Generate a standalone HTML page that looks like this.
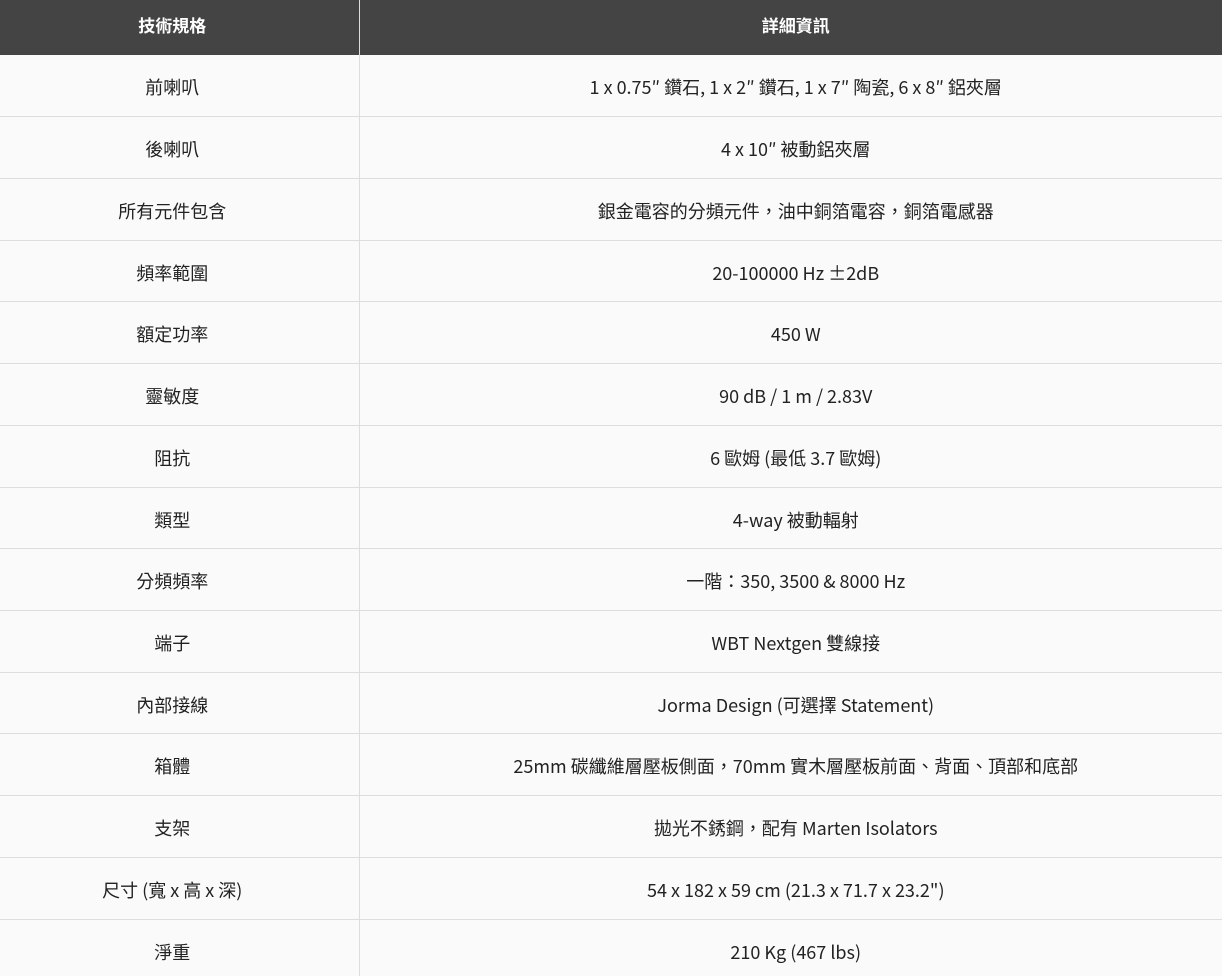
<!DOCTYPE html>
<html><head><meta charset="utf-8"><style>
html,body{margin:0;padding:0;background:#fafafa;width:1222px;height:976px;overflow:hidden}
table{border-collapse:collapse;width:1222px;table-layout:fixed;font-family:"Noto Sans CJK TC",sans-serif;font-size:18px;color:#222}
th{background:#444;color:#fff;height:55px;font-weight:bold;font-size:17px;padding:0 0 6px 0;box-sizing:border-box;line-height:1}
th:first-child{border-right:1px solid #ddd;padding-right:14px}
th+th{padding-left:10px}
td{height:61.73px;text-align:center;padding:5px 0 0 0;box-sizing:border-box;border-bottom:1px solid #ddd;line-height:1.2}
td:first-child{border-right:1px solid #ddd;padding-right:14px}
td+td{padding-left:10px}
col.a{width:359px}
</style></head><body>
<table><colgroup><col class="a"><col></colgroup>
<tr><th>技術規格</th><th>詳細資訊</th></tr>
<tr><td>前喇叭</td><td>1 x 0.75″ 鑽石, 1 x 2″ 鑽石, 1 x 7″ 陶瓷, 6 x 8″ 鋁夾層</td></tr>
<tr><td>後喇叭</td><td>4 x 10″ 被動鋁夾層</td></tr>
<tr><td>所有元件包含</td><td>銀金電容的分頻元件，油中銅箔電容，銅箔電感器</td></tr>
<tr><td>頻率範圍</td><td>20-100000 Hz ±2dB</td></tr>
<tr><td>額定功率</td><td>450 W</td></tr>
<tr><td>靈敏度</td><td>90 dB / 1 m / 2.83V</td></tr>
<tr><td>阻抗</td><td>6 歐姆 (最低 3.7 歐姆)</td></tr>
<tr><td>類型</td><td>4-way 被動輻射</td></tr>
<tr><td>分頻頻率</td><td>一階：350, 3500 &amp; 8000 Hz</td></tr>
<tr><td>端子</td><td>WBT Nextgen 雙線接</td></tr>
<tr><td>內部接線</td><td>Jorma Design (可選擇 Statement)</td></tr>
<tr><td>箱體</td><td>25mm 碳纖維層壓板側面，70mm 實木層壓板前面、背面、頂部和底部</td></tr>
<tr><td>支架</td><td>拋光不銹鋼，配有 Marten Isolators</td></tr>
<tr><td>尺寸 (寬 x 高 x 深)</td><td>54 x 182 x 59 cm (21.3 x 71.7 x 23.2")</td></tr>
<tr><td>淨重</td><td>210 Kg (467 lbs)</td></tr>
</table>
</body></html>
